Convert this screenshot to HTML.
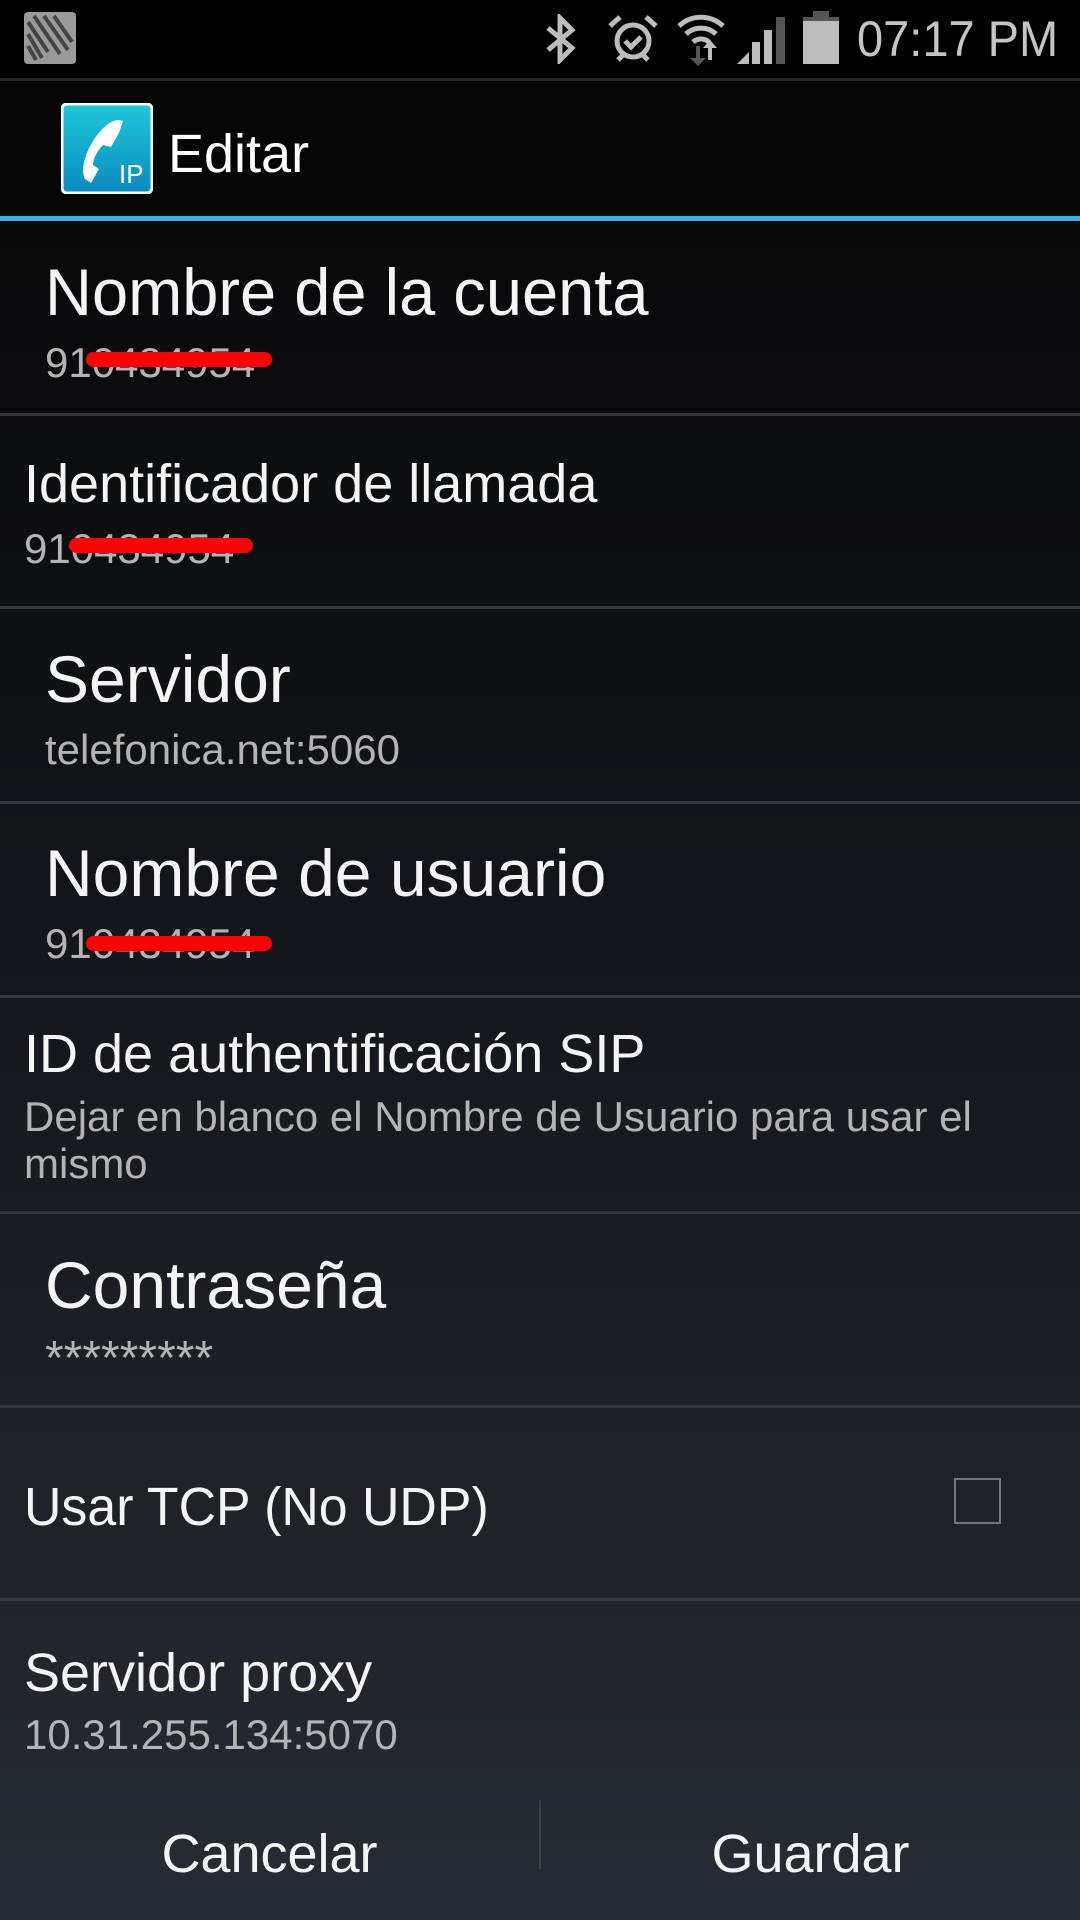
<!DOCTYPE html>
<html><head><meta charset="utf-8"><style>
*{margin:0;padding:0;box-sizing:border-box}
body{width:1080px;height:1920px;overflow:hidden;background:#000;font-family:"Liberation Sans",sans-serif;position:relative}
.t{position:absolute;white-space:nowrap;line-height:1}
.big{font-size:66px;color:#f4f4f4}
.mid{font-size:54px;color:#f4f4f4}
.sub{font-size:42px;color:#b4b4b4}
.sep{position:absolute;left:0;width:1080px;height:3px;background:#34373c}
.red{position:absolute;height:15px;background:#f00;border-radius:8px}
</style></head><body>
<div style="position:absolute;left:0;top:0;width:1080px;height:78px;background:#000"></div>
<div style="position:absolute;left:0;top:78px;width:1080px;height:3px;background:#252525"></div>
<svg style="position:absolute;left:24px;top:12px" width="52" height="52" viewBox="0 0 52 52"><rect width="52" height="52" rx="4" fill="#9a9a9a"/><path d="M4 10l20 30M10 4l26 38M20 4l24 34M30 4l18 26M4 22l14 24M4 34l8 14" stroke="#444" stroke-width="4"/></svg>
<svg style="position:absolute;left:544px;top:14px" width="34" height="50" viewBox="0 0 34 50"><path d="M4 14l24 20-12 12V4l12 12L4 36" fill="none" stroke="#bdbdbd" stroke-width="5"/></svg>
<svg style="position:absolute;left:608px;top:14px" width="50" height="50" viewBox="0 0 50 50"><circle cx="25" cy="27" r="16" fill="none" stroke="#bdbdbd" stroke-width="5"/><path d="M17 27l6 6 10-10" fill="none" stroke="#bdbdbd" stroke-width="5"/><path d="M2 12L12 3M48 12L38 3M10 46l5-5M40 46l-5-5" stroke="#bdbdbd" stroke-width="5"/></svg>
<svg style="position:absolute;left:676px;top:12px" width="50" height="54" viewBox="0 0 50 54"><path d="M3 14a32 32 0 0 1 44 0M10 22a22 22 0 0 1 30 0M17 30a12 12 0 0 1 16 0" fill="none" stroke="#bdbdbd" stroke-width="5"/><path d="M20 34v12h-6l8 8 8-8h-6V34z" fill="#555"/><path d="M32 48V36h-5l7-8 7 8h-5v12z" fill="#bdbdbd"/></svg>
<svg style="position:absolute;left:737px;top:14px" width="48" height="50" viewBox="0 0 48 50"><path d="M0 50L12 38V50z" fill="#bdbdbd"/><rect x="15" y="28" width="8" height="22" fill="#bdbdbd"/><rect x="27" y="16" width="8" height="34" fill="#bdbdbd"/><rect x="39" y="3" width="9" height="47" fill="#555"/></svg>
<div style="position:absolute;left:813px;top:11px;width:16px;height:8px;background:#555"></div>
<div style="position:absolute;left:803px;top:17px;width:36px;height:4px;background:#555"></div>
<div style="position:absolute;left:803px;top:21px;width:36px;height:43px;background:#bdbdbd"></div>
<div class="t" style="left:857px;top:14px;font-size:50px;color:#c4c4c4;transform:scaleX(.94);transform-origin:left">07:17 PM</div>

<div style="position:absolute;left:0;top:81px;width:1080px;height:135px;background:#050505"></div>
<svg style="position:absolute;left:61px;top:103px" width="92" height="91" viewBox="0 0 92 91"><defs><linearGradient id="g" x1="0" y1="0" x2="0" y2="1"><stop offset="0" stop-color="#1ec8d8"/><stop offset="1" stop-color="#0a8ac0"/></linearGradient></defs><rect x="1" y="1" width="90" height="89" rx="5" fill="url(#g)" stroke="#fff" stroke-width="3"/><path d="M62 18c-8-4-20 4-30 20S20 70 24 76l6 4 8-14-6-4c0-6 4-14 10-20l8 2 8-14z" fill="#fff"/><text x="58" y="80" font-family="Liberation Sans" font-size="26" fill="#fff">IP</text></svg>
<div class="t" style="left:168px;top:127px;font-size:54px;color:#fff">Editar</div>
<div style="position:absolute;left:0;top:216px;width:1080px;height:5px;background:#33b5e5"></div>

<div style="position:absolute;left:0;top:221px;width:1080px;height:1699px;background:linear-gradient(#09090a,#13151a 40%,#1f2227 75%,#272b33)"></div>

<div class="t big" style="left:45px;top:259px;transform:scaleX(.985);transform-origin:left">Nombre de la cuenta</div>
<div class="t sub" style="left:45px;top:342px">910434954</div>
<div class="red" style="left:86px;top:352px;width:186px"></div>
<div class="sep" style="top:413px"></div>

<div class="t mid" style="left:24px;top:457px">Identificador de llamada</div>
<div class="t sub" style="left:24px;top:528px">910434954</div>
<div class="red" style="left:69px;top:538px;width:184px"></div>
<div class="sep" style="top:606px"></div>

<div class="t big" style="left:45px;top:646px">Servidor</div>
<div class="t sub" style="left:45px;top:729px">telefonica.net:5060</div>
<div class="sep" style="top:801px"></div>

<div class="t big" style="left:45px;top:840px">Nombre de usuario</div>
<div class="t sub" style="left:45px;top:923px">910434954</div>
<div class="red" style="left:86px;top:936px;width:186px"></div>
<div class="sep" style="top:995px"></div>

<div class="t mid" style="left:24px;top:1027px">ID de authentificación SIP</div>
<div class="t sub" style="left:24px;top:1096px">Dejar en blanco el Nombre de Usuario para usar el</div>
<div class="t sub" style="left:24px;top:1143px">mismo</div>
<div class="sep" style="top:1211px"></div>

<div class="t big" style="left:45px;top:1252px">Contraseña</div>
<div class="t" style="left:45px;top:1335px;font-size:48px;color:#b4b4b4">*********</div>
<div class="sep" style="top:1405px"></div>

<div class="t mid" style="left:24px;top:1480px;transform:scaleX(.96);transform-origin:left">Usar TCP (No UDP)</div>
<div style="position:absolute;left:954px;top:1478px;width:47px;height:46px;border:2px solid #777"></div>
<div class="sep" style="top:1598px"></div>

<div class="t mid" style="left:24px;top:1646px">Servidor proxy</div>
<div class="t sub" style="left:24px;top:1714px">10.31.255.134:5070</div>

<div style="position:absolute;left:539px;top:1800px;width:2px;height:69px;background:#3d4047"></div>
<div class="t mid" style="left:0;width:539px;text-align:center;top:1827px">Cancelar</div>
<div class="t mid" style="left:541px;width:539px;text-align:center;top:1827px">Guardar</div>
</body></html>
